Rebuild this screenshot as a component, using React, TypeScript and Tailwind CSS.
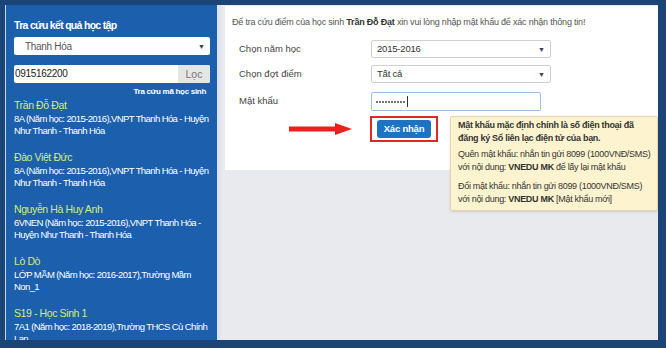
const students = [
  { name: "Trần Đỗ Đạt", info: "8A (Năm học: 2015-2016),VNPT Thanh Hóa - Huyện Như Thanh - Thanh Hóa" },
  { name: "Đào Việt Đức", info: "8A (Năm học: 2015-2016),VNPT Thanh Hóa - Huyện Như Thanh - Thanh Hóa" },
  { name: "Nguyễn Hà Huy Anh", info: "6VNEN (Năm học: 2015-2016),VNPT Thanh Hóa - Huyện Như Thanh - Thanh Hóa" },
  { name: "Lò Dò", info: "LỚP MẦM (Năm học: 2016-2017),Trường Mầm Non_1" },
  { name: "S19 - Học Sinh 1", info: "7A1 (Năm học: 2018-2019),Trường THCS Cù Chính Lan" },
];

function Caret() {
  return <span className="text-[7px] leading-none text-gray-700">▼</span>;
}

function Sidebar() {
  return (
    <div className="w-[212px] shrink-0 bg-[#1c60ad] border-l border-[#c9d6e6] pl-[8px] pr-[7px] pt-[13px] overflow-hidden">
      <div className="text-[10.5px] font-bold text-white leading-[14px] tracking-[-0.7px]">Tra cứu kết quả học tập</div>
      <div className="mt-[5px] h-[18px] bg-white rounded-[2px] flex items-center justify-between pl-[11px] pr-[5px]">
        <span className="text-[10px] text-[#555] tracking-[-0.3px]">Thanh Hóa</span>
        <Caret />
      </div>
      <div className="mt-[10px] h-[18px] bg-white rounded-[2px] flex overflow-hidden">
        <span className="flex-1 pl-[1px] text-[10px] leading-[18px] text-[#222] tracking-[-0.3px]">0915162200</span>
        <span className="w-[32px] bg-[#e6e6e6] text-[10.5px] leading-[18px] text-[#777] text-center">Lọc</span>
      </div>
      <div className="mt-[3px] pr-[4px] text-right text-[8px] font-bold text-white leading-[12px] tracking-[-0.3px]">
        Tra cứu mã học sinh
      </div>
      <div className="flex flex-col gap-[13px]">
        {students.map((s) => (
          <div key={s.name}>
            <div className="text-[10.5px] leading-[15px] text-[#d6ec74] tracking-[-0.4px]">{s.name}</div>
            <div className="text-[9.5px] leading-[12px] text-white tracking-[-0.6px]">{s.info}</div>
          </div>
        ))}
      </div>
    </div>
  );
}

function Label({ children }: { children: React.ReactNode }) {
  return <div className="w-[146px] pl-[14px] text-[9.5px] text-[#444]">{children}</div>;
}

function Select({ value }: { value: string }) {
  return (
    <div className="w-[180px] h-[18px] border border-[#cfcfcf] rounded-[2px] bg-white flex items-center justify-between pl-[5px] pr-[5px]">
      <span className="text-[9.5px] text-[#333] tracking-[-0.2px]">{value}</span>
      <Caret />
    </div>
  );
}

function Tooltip() {
  return (
    <div className="absolute left-[229px] top-[111px] w-[208px] h-[95px] bg-[#fdf4cf] border border-[#e6d3b4] rounded-[2px] shadow-sm pl-[7px] pr-[4px] pt-[2px] text-[9px] leading-[13px] tracking-[-0.3px] text-[#333]">
      <div className="font-bold">Mật khẩu mặc định chính là số điện thoại đã đăng ký Sổ liên lạc điện tử của bạn.</div>
      <div className="mt-[3px]">
        Quên mật khẩu: nhắn tin gửi 8099 (1000VNĐ/SMS) với nội dung: <b>VNEDU MK</b> để lấy lại mật khẩu
      </div>
      <div className="mt-[6px]">
        Đổi mật khẩu: nhắn tin gửi 8099 (1000VNĐ/SMS) với nội dung: <b>VNEDU MK</b> [Mật khẩu mới]
      </div>
    </div>
  );
}

function Main() {
  return (
    <div className="flex-1 bg-[#e9eaee] border-l-4 border-[#dde4ee] pl-[4px] pt-[1px] relative">
      <div className="bg-white h-[164px] pt-[9px]">
        <div className="pl-[7px] text-[9px] text-[#555] leading-[14px] tracking-[-0.2px] whitespace-nowrap">
          Để tra cứu điểm của học sinh <b className="text-[#333]">Trần Đỗ Đạt</b> xin vui lòng nhập mật khẩu để xác nhận thông tin!
        </div>
        <div className="mt-[11px] flex items-center">
          <Label>Chọn năm học</Label>
          <Select value="2015-2016" />
        </div>
        <div className="mt-[7px] flex items-center">
          <Label>Chọn đợt điểm</Label>
          <Select value="Tất cả" />
        </div>
        <div className="mt-[9px] flex items-center">
          <Label>Mật khẩu</Label>
          <div className="w-[170px] h-[19px] border border-[#9fbfe6] rounded-[2px] bg-white flex items-center pl-[4px] gap-[1px]">
            {Array.from({ length: 10 }).map((_, i) => (
              <span key={i} className="w-[2px] h-[2px] rounded-full bg-[#444]" />
            ))}
            <span className="ml-[1px] w-px h-[11px] bg-[#333]" />
          </div>
        </div>
        <div className="mt-[5px] flex items-center">
          <svg width="63" height="12" viewBox="0 0 63 12" className="ml-[64px] mr-[18px]">
            <polygon points="0,3.5 46,3.5 46,0 63,6 46,12 46,8.5 0,8.5" fill="#e8231c" />
          </svg>
          <div className="border-2 border-[#e02626] px-[5px] py-[2px]">
            <div className="w-[54px] h-[18px] bg-[#1d72c2] rounded-[3px] text-white text-[9.5px] font-bold flex items-center justify-center tracking-[-0.2px]">
              Xác nhận
            </div>
          </div>
        </div>
      </div>
      <Tooltip />
    </div>
  );
}

export default function App() {
  return (
    <div className="w-[666px] h-[348px] bg-[#1b4577] pt-[5px] pl-[5px] pr-[8px] pb-[8px] font-['Liberation_Sans',Arial,sans-serif]">
      <div className="h-full flex overflow-hidden">
        <Sidebar />
        <Main />
      </div>
    </div>
  );
}
